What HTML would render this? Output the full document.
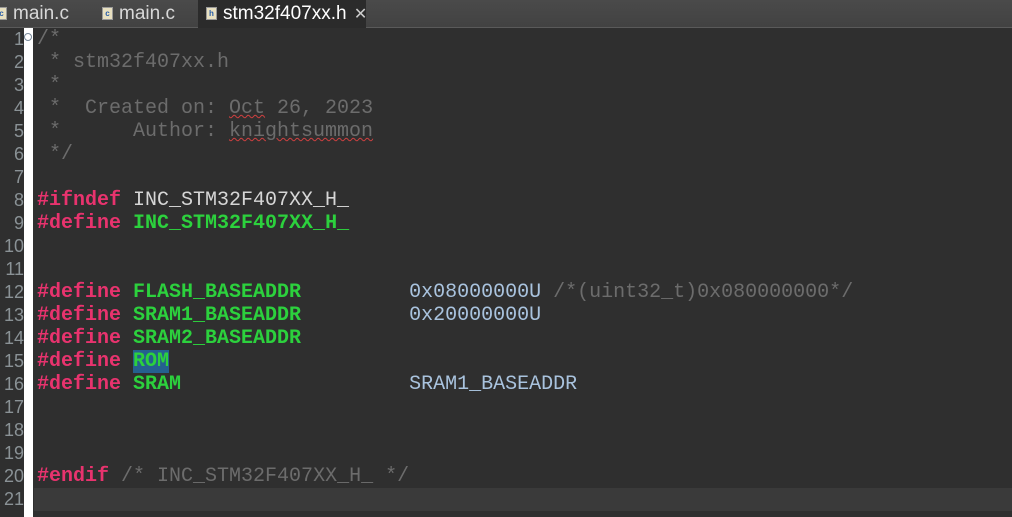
<!DOCTYPE html>
<html><head><style>
body{margin:0;width:1012px;height:517px;overflow:hidden;background:#2f2f2f;position:relative;font-family:"Liberation Sans",sans-serif}
#tabs{position:absolute;left:0;top:0;width:1012px;height:27px;background:linear-gradient(#4a4a4a,#424242);border-bottom:1px solid #5a5a5a}
.tab{position:absolute;top:0;height:28px;color:#d8d8d8;font-size:19px;line-height:28px;white-space:nowrap}
.ic{display:inline-block;width:9px;height:11px;background:#e8e0c0;border:1px solid #999;vertical-align:middle;margin-right:6px;font-size:8px;line-height:11px;color:#2a5ea8;text-align:center;font-weight:bold}
#act{left:198px;width:168px;background:#2b2b2b;color:#fff;padding-left:8px;box-sizing:border-box}
#gut{position:absolute;left:0;top:28px;width:24px;height:489px;background:#2f2f2f}
#strip{position:absolute;left:24px;top:28px;width:9px;height:489px;background:#fff}
#cur{position:absolute;left:34px;top:488px;width:978px;height:23px;background:#3a3a3a}
.ln{position:absolute;left:0;width:24px;text-align:right;color:#8a9296;font-size:18px;height:23px;line-height:23px}
.code{position:absolute;left:37px;top:28px;font-family:"Liberation Mono",monospace;font-size:20px;line-height:23px;white-space:pre;color:#d6d6d6}
.c{color:#6c6c6c}.k{color:#e8336e;font-weight:bold}.m{color:#2cd13d;font-weight:bold}.n{color:#a9c3de}
.sq{text-decoration:underline wavy #d04040;text-decoration-thickness:1px}
.sel{background:#25608f}
</style></head><body>
<div id="tabs">
<div class="tab" style="left:-4px"><span class="ic">c</span>main.c</div>
<div class="tab" style="left:102px"><span class="ic">c</span>main.c</div>
<div class="tab" id="act"><span class="ic">h</span>stm32f407xx.h <span style="font-size:16px;color:#ccc;margin-left:2px">✕</span></div>
</div>
<div id="gut"></div><div id="strip"></div><div id="cur"></div>
<div style="position:absolute;left:24px;top:33px;width:8px;height:8px;border:1px solid #789;border-radius:50%;box-sizing:border-box;background:#fff"></div>
<div class="ln" style="top:28px">1</div><div class="ln" style="top:51px">2</div><div class="ln" style="top:74px">3</div><div class="ln" style="top:97px">4</div><div class="ln" style="top:120px">5</div><div class="ln" style="top:143px">6</div><div class="ln" style="top:166px">7</div><div class="ln" style="top:189px">8</div><div class="ln" style="top:212px">9</div><div class="ln" style="top:235px">10</div><div class="ln" style="top:258px">11</div><div class="ln" style="top:281px">12</div><div class="ln" style="top:304px">13</div><div class="ln" style="top:327px">14</div><div class="ln" style="top:350px">15</div><div class="ln" style="top:373px">16</div><div class="ln" style="top:396px">17</div><div class="ln" style="top:419px">18</div><div class="ln" style="top:442px">19</div><div class="ln" style="top:465px">20</div><div class="ln" style="top:488px">21</div>
<div class="code"><span class="c">/*
 * stm32f407xx.h
 *
 *  Created on: <span class="sq">Oct</span> 26, 2023
 *      Author: <span class="sq">knightsummon</span>
 */</span>

<span class="k">#ifndef</span> INC_STM32F407XX_H_
<span class="k">#define</span> <span class="m">INC_STM32F407XX_H_</span>


<span class="k">#define</span> <span class="m">FLASH_BASEADDR</span>         <span class="n">0x08000000U</span> <span class="c">/*(uint32_t)0x080000000*/</span>
<span class="k">#define</span> <span class="m">SRAM1_BASEADDR</span>         <span class="n">0x20000000U</span>
<span class="k">#define</span> <span class="m">SRAM2_BASEADDR</span>
<span class="k">#define</span> <span class="m sel">ROM</span>
<span class="k">#define</span> <span class="m">SRAM</span>                   <span class="n">SRAM1_BASEADDR</span>



<span class="k">#endif</span> <span class="c">/* INC_STM32F407XX_H_ */</span>
</div>
</body></html>
